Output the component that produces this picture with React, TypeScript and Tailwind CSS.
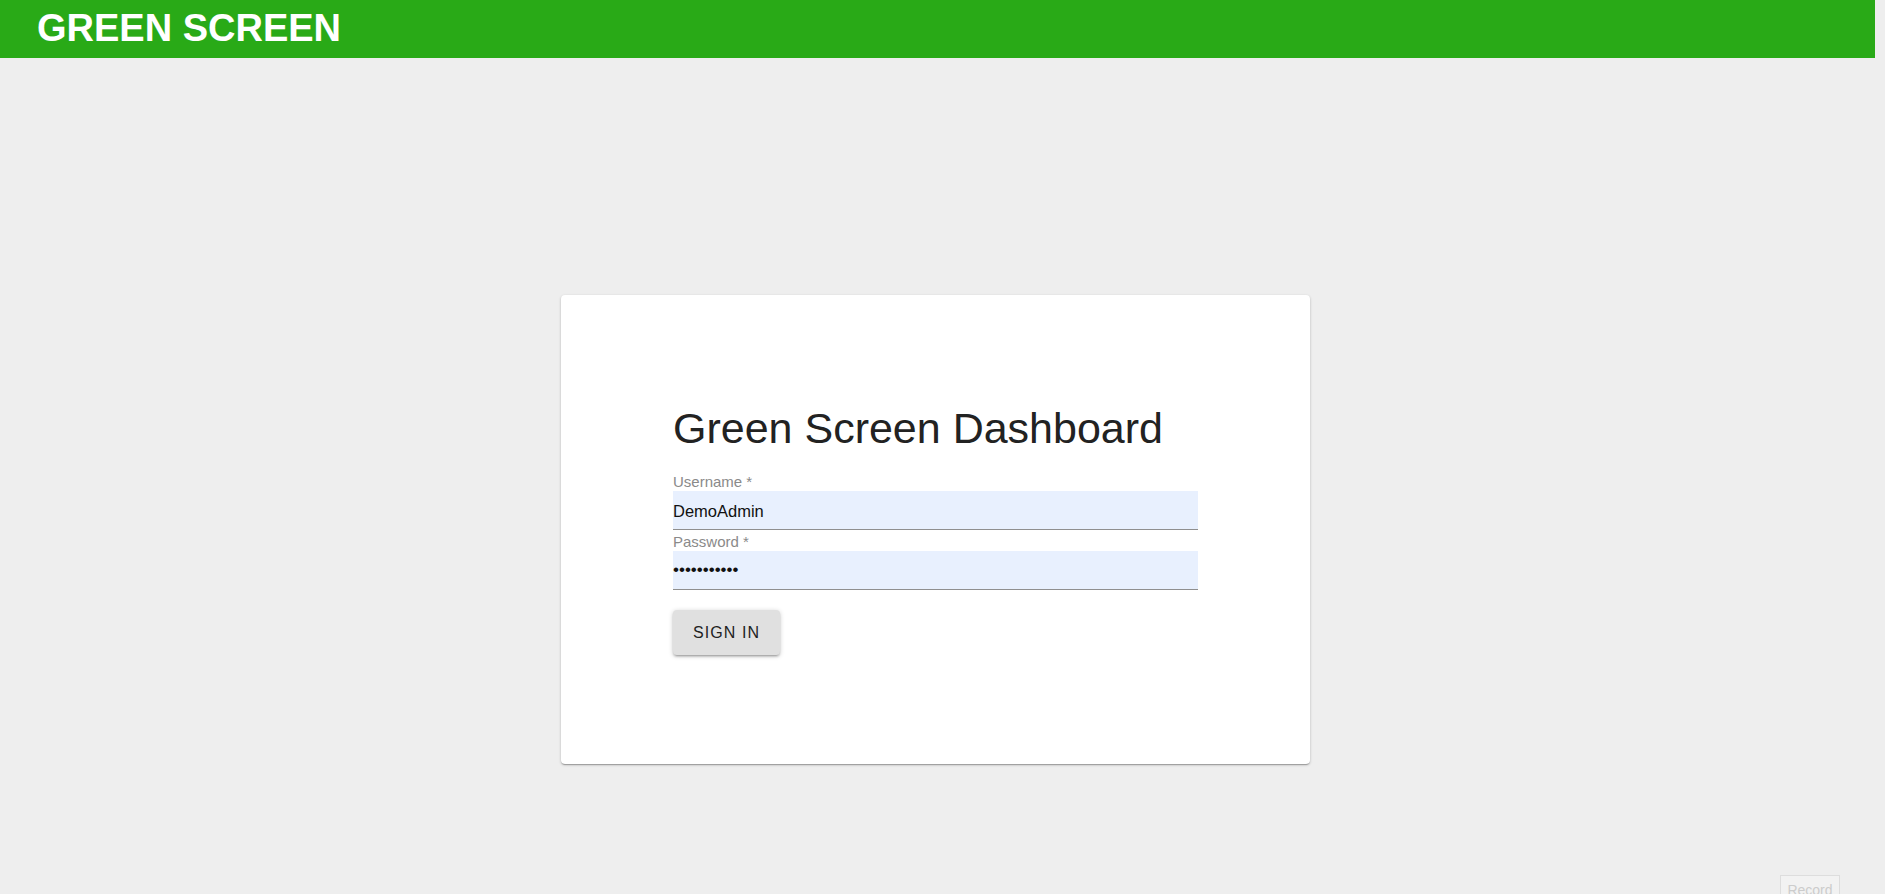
import React from "react";

export default function App() {
  return (
    <div
      className="min-h-screen w-full bg-[#eeeeee] relative overflow-hidden"
      style={{ fontFamily: '"Liberation Sans", Arial, sans-serif' }}
    >
      <header className="h-[58px] w-[1875px] bg-[#29aa17] pl-[37px] pt-[9px]">
        <h1 className="text-[38px] leading-none font-bold text-white">GREEN SCREEN</h1>
      </header>

      <main className="w-[1871px] flex justify-center pt-[237px]">
        <div className="w-[749px] bg-white rounded-[4px] shadow-[0_1px_3px_rgba(0,0,0,0.2),0_1px_1px_rgba(0,0,0,0.14),0_2px_1px_-1px_rgba(0,0,0,0.12)] px-[112px] pt-[112px] pb-[109px] flex flex-col">
          <h2 className="text-[43px] leading-[43px] text-[#222222] font-normal">
            Green Screen Dashboard
          </h2>

          <div className="mt-[23px] flex flex-col gap-[2px]">
            <div className="flex flex-col">
              <label className="text-[15px] leading-[18px] text-[#8a8a8a]">Username *</label>
              <input
                type="text"
                readOnly
                defaultValue="DemoAdmin"
                className="h-[39px] w-full bg-[#e8f0fe] border-b border-[#8f8f8f] text-[16.5px] text-[#111111] outline-none pt-[2px]"
                style={{ fontFamily: '"Liberation Sans", Arial, sans-serif' }}
              />
            </div>
            <div className="flex flex-col">
              <label className="text-[15px] leading-[19px] text-[#8a8a8a]">Password *</label>
              <input
                type="password"
                readOnly
                defaultValue="DemoAdmin12"
                className="h-[39px] w-full bg-[#e8f0fe] border-b border-[#8f8f8f] text-[17px] text-[#111111] outline-none"
                style={{ fontFamily: '"Liberation Sans", Arial, sans-serif' }}
              />
            </div>
          </div>

          <div className="mt-[20px] flex">
            <button className="h-[45px] px-[20px] bg-[#e0e0e0] rounded-[4px] text-[16px] tracking-[1.1px] text-[#222222] shadow-[0_1px_5px_rgba(0,0,0,0.2),0_2px_2px_rgba(0,0,0,0.14),0_3px_1px_-2px_rgba(0,0,0,0.12)]">
              SIGN IN
            </button>
          </div>
        </div>
      </main>

      <button className="fixed right-[45px] bottom-[-16px] w-[60px] h-[35px] bg-[#f2f2f2] border border-[#dddddd] text-[14px] text-[#cccccc] pb-[4px]">
        Record
      </button>
    </div>
  );
}
